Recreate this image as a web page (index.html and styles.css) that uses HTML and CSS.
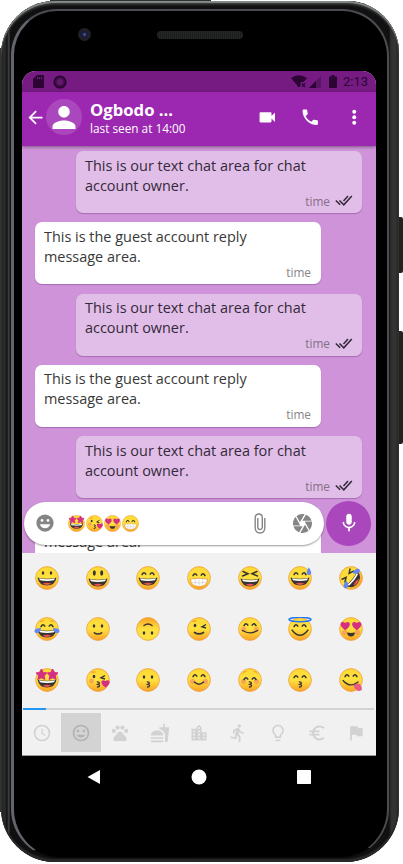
FILE: index.html
```html
<!DOCTYPE html>
<html lang="en">
<head>
<meta charset="utf-8">
<meta name="viewport" content="width=device-width, initial-scale=1">
<title>Chat</title>
<link rel="stylesheet" href="styles.css">
</head>
<body>
<svg class="defs" aria-hidden="true">
  <defs>
    <linearGradient id="skin" x1="0" y1="0" x2="0" y2="1"><stop offset="0" stop-color="#fdd835"/><stop offset=".5" stop-color="#fee13f"/><stop offset="1" stop-color="#f9a125"/></linearGradient>
    <linearGradient id="skin-flip" x1="0" y1="1" x2="0" y2="0"><stop offset=".5" stop-color="#fee13f"/><stop offset="1" stop-color="#f9a125"/></linearGradient>
    <symbol id="face" viewBox="0 0 24 24"><circle cx="12" cy="12" r="11.4" fill="url(#skin)" stroke="#eda044" stroke-width=".8"/></symbol>
    <symbol id="grin-mouth" viewBox="0 0 24 24"><path d="M2.5 12.5Q12 15 21.500 12.500Q20 20.500 12 20.500T2.500 12.500Z" fill="#383433"/><path d="M4 13.300Q12 15.200 20 13.300L19 15.300Q12 16.700 5 15.300Z" fill="#fff"/><path d="M7.500 18.800Q12 16.500 16.500 18.800Q12 21 7.500 18.800" fill="#ef5350"/></symbol>
    <symbol id="arc-eyes" viewBox="0 0 24 24"><path d="M6 8.700Q7.800 5 9.800 8.200M14.200 8.200Q16.200 5 18 8.700" fill="none" stroke="#383433" stroke-width="1.500" stroke-linecap="round"/></symbol>
    <symbol id="dot-eyes" viewBox="0 0 24 24"><ellipse cx="8" cy="8" rx="1.250" ry="1.700" fill="#383433"/><ellipse cx="16" cy="8" rx="1.250" ry="1.700" fill="#383433"/></symbol>
    <symbol id="wink-eyes" viewBox="0 0 24 24"><ellipse cx="8" cy="8.500" rx="1.300" ry="1.800" fill="#383433"/><path d="M19 7.500L15 9.800L19 11" fill="none" stroke="#383433" stroke-width="1.400"/><path d="M5.500 5Q7 3.300 9.500 4.200" fill="none" stroke="#ef9a27" stroke-width="1.100"/></symbol>
    <symbol id="heart" viewBox="0 0 10 10"><path d="M5 9.500C-3 4 1-.8 5 2.200C9-.8 13 4 5 9.500Z" fill="#d52f83"/></symbol>
    <symbol id="star" viewBox="0 0 10 10"><path d="M5 0L6.500 3.200L10 3.600L7.400 6L8.200 9.700L5 7.900L1.800 9.700L2.600 6L0 3.600L3.500 3.200Z" fill="#d52f83" stroke="#d52f83" stroke-linejoin="round"/></symbol>
    <symbol id="blush" viewBox="0 0 24 24"><circle cx="5.500" cy="13.300" r="2.600" fill="#f58d62" opacity=".65"/><circle cx="18.500" cy="13.300" r="2.600" fill="#f58d62" opacity=".65"/></symbol>
    <symbol id="kiss" viewBox="0 0 24 24"><path d="M10.800 13.900Q14 13.700 13.200 15.500L11.700 16.400Q14.500 16.800 13 18.700L10.900 19.200" fill="none" stroke="#383433" stroke-width="1.300"/></symbol>

    <symbol id="e-grin" viewBox="0 0 24 24"><use href="#face"/><use href="#dot-eyes" y="-1"/><use href="#grin-mouth" y="-1"/></symbol>
    <symbol id="e-open" viewBox="0 0 24 24"><use href="#face"/><ellipse cx="8.300" cy="7" rx="1.500" ry="2.800" fill="#383433"/><ellipse cx="15.700" cy="7" rx="1.500" ry="2.800" fill="#383433"/><use href="#grin-mouth"/></symbol>
    <symbol id="e-smile-open" viewBox="0 0 24 24"><use href="#face"/><use href="#arc-eyes"/><use href="#grin-mouth" y="-1"/></symbol>
    <symbol id="e-beam" viewBox="0 0 24 24"><use href="#face"/><use href="#arc-eyes" y="1"/><path d="M3.500 13Q12 11.300 20.500 13Q20.500 20.500 12 20.500T3.500 13Z" fill="#fff" stroke="#e59b2b" stroke-width=".8"/><path d="M4 16.400Q12 17.300 20 16.400M8.300 12.800V20M12 12.400V20.500M15.700 12.800V20" fill="none" stroke="#cfcfcf" stroke-width=".7"/></symbol>
    <symbol id="e-laugh" viewBox="0 0 24 24"><use href="#face"/><path d="M5 5.500L10 7.700L4.500 10M19 5.500L14 7.700L19.500 10" fill="none" stroke="#383433" stroke-width="1.500" stroke-linecap="round"/><use href="#grin-mouth"/></symbol>
    <symbol id="e-sweat" viewBox="0 0 24 24"><use href="#e-smile-open"/><path d="M20.800 1.500C18 6 18.200 9 21 9S24 6 20.800 1.500" fill="#6388f5"/></symbol>
    <symbol id="tear" viewBox="0 0 10 8"><path d="M9.500 .5Q1 .5 .5 4.500Q2 9 6 6.500Q9 4.500 9.500 .5" fill="#6388f5"/></symbol>
    <symbol id="e-rofl" viewBox="0 0 24 24"><g transform="rotate(-52 12 12)"><use href="#face"/><path d="M5 5.500L9.500 7.700L4.500 10M19 5.500L14.500 7.700L19.500 10" fill="none" stroke="#383433" stroke-width="1.500"/><use href="#grin-mouth"/><use href="#tear" x="-.5" y="9" width="8" height="7"/><g transform="translate(24 0) scale(-1 1)"><use href="#tear" x="-.5" y="9" width="8" height="7"/></g></g></symbol>
    <symbol id="e-joy" viewBox="-1 0 26 24"><use href="#face" width="24" height="24"/><use href="#arc-eyes" y="1" width="24" height="24"/><path d="M5 5Q7 3 9 4M15 4Q17 3 19 5" fill="none" stroke="#ef9a27"/><use href="#grin-mouth" width="24" height="24"/><use href="#tear" x="-1" y="10" width="7.500" height="7"/><g transform="translate(24 0) scale(-1 1)"><use href="#tear" x="-1" y="10" width="7.500" height="7"/></g></symbol>
    <symbol id="e-slight" viewBox="0 0 24 24"><use href="#face"/><use href="#dot-eyes" y="1"/><path d="M8.300 15.800Q12 18.300 15.700 15.800" fill="none" stroke="#383433" stroke-width="1.500" stroke-linecap="round"/></symbol>
    <symbol id="e-flip" viewBox="0 0 24 24"><circle cx="12" cy="12" r="11.400" fill="url(#skin-flip)" stroke="#eda044" stroke-width=".8"/><g transform="rotate(180 12 12)"><use href="#dot-eyes"/><path d="M8 15.500Q12 18.300 16 15.500" fill="none" stroke="#383433" stroke-width="1.500" stroke-linecap="round"/></g></symbol>
    <symbol id="e-wink" viewBox="0 0 24 24"><use href="#face"/><use href="#wink-eyes"/><path d="M7.500 15.500Q12 18.300 16.500 15.500" fill="none" stroke="#383433" stroke-width="1.700" stroke-linecap="round"/></symbol>
    <symbol id="e-blush" viewBox="0 0 24 24"><use href="#face"/><use href="#blush" y="-1"/><use href="#arc-eyes"/><path d="M4.500 13.500Q12 18.200 19.500 13.500" fill="none" stroke="#383433" stroke-width="1.400" stroke-linecap="round"/></symbol>
    <symbol id="e-halo" viewBox="0 0 24 24"><use href="#face"/><use href="#arc-eyes" y="1"/><path d="M4 13Q12 23.500 20 13" fill="none" stroke="#383433" stroke-width="1.300" stroke-linecap="round"/><ellipse cx="12" cy="2.500" rx="11" ry="2.200" fill="none" stroke="#2678f5" stroke-width="1.500"/></symbol>
    <symbol id="e-hearts" viewBox="0 0 24 24"><use href="#face"/><use href="#blush" y="2"/><use href="#heart" x="1" y="3.800" width="10.500" height="10"/><use href="#heart" x="12.500" y="3.800" width="10.500" height="10"/><path d="M8 15.500Q12 16.300 16 15.500Q15.500 19.500 12 19.500T8 15.500" fill="#383433"/></symbol>
    <symbol id="e-stars" viewBox="0 0 24 24"><use href="#face"/><use href="#grin-mouth" y="-1"/><use href="#star" x="1" y="1" width="10.800" height="10.800"/><use href="#star" x="12.200" y="1" width="10.800" height="10.800"/></symbol>
    <symbol id="e-kissheart" viewBox="0 0 24 24"><use href="#face"/><circle cx="5.500" cy="13" r="2.400" fill="#f58d62" opacity=".7"/><use href="#wink-eyes"/><use href="#kiss"/><use href="#heart" x="15" y="11" width="9" height="9"/></symbol>
    <symbol id="e-kissing" viewBox="0 0 24 24"><use href="#face"/><use href="#dot-eyes" y="1"/><use href="#kiss"/></symbol>
    <symbol id="e-happy" viewBox="0 0 24 24"><use href="#face"/><use href="#blush"/><use href="#arc-eyes"/><path d="M7.500 14Q12 18.500 16.500 14" fill="none" stroke="#383433" stroke-width="1.500" stroke-linecap="round"/></symbol>
    <symbol id="e-kissclosed" viewBox="0 0 24 24"><use href="#face"/><use href="#blush"/><path d="M5 5.500Q6 3 8.500 3.500M15.500 3.500Q18 3 19 5.500" fill="none" stroke="#ef9a27"/><use href="#arc-eyes" y="3"/><use href="#kiss"/></symbol>
    <symbol id="e-kisssmile" viewBox="0 0 24 24"><use href="#face"/><use href="#arc-eyes" y="1"/><use href="#kiss"/></symbol>
    <symbol id="e-yum" viewBox="0 0 24 24"><use href="#face"/><use href="#arc-eyes"/><path d="M4 12.500Q11 20.500 19 14" fill="none" stroke="#383433" stroke-width="1.300" stroke-linecap="round"/><path d="M14.500 17.500Q19 13.500 22 17.500Q24.500 22.500 20.500 23Q16.500 23 14.500 17.500" fill="#e75a83"/></symbol>

    <symbol id="ticks" viewBox="0 0 18 11"><path d="M.8 5.500L5.200 9.800M4.500 5.500L8.800 9.800L16.800 1M8.500 6L13 1" fill="none" stroke="#33273a" stroke-width="1.500"/></symbol>
  </defs>
</svg>

<div class="phone">
  <i class="edge edge-top"></i><i class="edge edge-left"></i>
  <i class="key key-power"></i><i class="key key-volume"></i>
  <div class="body">
    <div class="glass">
      <div class="top-bezel"><span class="camera"></span><span class="speaker"></span></div>
      <div class="screen">
        <div class="status">
          <svg class="sd" viewBox="0 0 11 13"><path d="M4 0H10Q11 0 11 1V12Q11 13 10 13H1Q0 13 0 12V4Z" fill="#2c0433"/><path d="M4.500 2V4M6.500 2V4M8.500 2V4" stroke="#751b82"/></svg>
          <svg class="ring" viewBox="0 0 14 14"><circle cx="7" cy="7" r="5.700" fill="#46104f" stroke="#2c0433" stroke-width="1.800"/><circle cx="7" cy="7" r="3" fill="#64176f"/></svg>
          <svg class="wifi" viewBox="0 0 16 13"><path d="M0 3Q8-2.500 16 3L12.600 7H9.500V10.700L8 12.500Z" fill="#2c0433"/><path d="M11 8.500L14 11.800M14 8.500L11 11.800" stroke="#2c0433" stroke-width="1.200"/></svg>
          <svg class="cell" viewBox="0 0 12 12"><path d="M12 0V12H0Z" fill="#591463"/><path d="M7 5V12H0Z" fill="#2c0433"/></svg>
          <svg class="battery" viewBox="0 0 8 13"><path d="M2.500 0H5.500V1.500H7.300Q8 1.500 8 2.200V12.300Q8 13 7.300 13H.7Q0 13 0 12.300V2.200Q0 1.500.7 1.500H2.500Z" fill="#2c0433"/></svg>
          <span class="clock">2:13</span>
        </div>
        <header class="header">
          <svg class="back" viewBox="0 0 24 24"><path d="M20 11H7.830l5.590-5.590L12 4l-8 8 8 8 1.410-1.410L7.830 13H20z" fill="#fff"/></svg>
          <div class="avatar"><svg viewBox="4 4 16 16"><path d="M12 12c2.210 0 4-1.790 4-4s-1.790-4-4-4-4 1.790-4 4 1.790 4 4 4zm0 2c-2.670 0-8 1.340-8 4v2h16v-2c0-2.660-5.330-4-8-4z" fill="#fff"/></svg></div>
          <div class="contact"><h1>Ogbodo ...</h1><p>last seen at 14:00</p></div>
          <div class="actions">
            <svg viewBox="0 0 24 24"><path d="M17 10.500V7c0-.55-.45-1-1-1H4c-.55 0-1 .45-1 1v10c0 .55.45 1 1 1h12c.55 0 1-.45 1-1v-3.500l4 4v-11l-4 4z"/></svg>
            <svg viewBox="0 0 24 24"><path d="M6.620 10.790c1.440 2.830 3.760 5.140 6.590 6.590l2.200-2.200c.27-.27.670-.36 1.020-.24 1.120.37 2.330.57 3.570.57.550 0 1 .45 1 1V20c0 .55-.45 1-1 1-9.390 0-17-7.610-17-17 0-.55.45-1 1-1h3.500c.55 0 1 .45 1 1 0 1.250.2 2.450.57 3.570.11.350.03.740-.25 1.020l-2.200 2.200z"/></svg>
            <svg viewBox="0 0 24 24"><circle cx="12" cy="5.500" r="2.300"/><circle cx="12" cy="12" r="2.300"/><circle cx="12" cy="18.500" r="2.300"/></svg>
          </div>
        </header>

        <main class="chat">
          <article class="bubble own"><p>This is our text chat area for chat<br>account owner.</p><footer>time<svg><use href="#ticks"/></svg></footer></article>
          <article class="bubble"><p>This is the guest account reply<br>message area.</p><footer>time</footer></article>
          <article class="bubble own"><p>This is our text chat area for chat<br>account owner.</p><footer>time<svg><use href="#ticks"/></svg></footer></article>
          <article class="bubble"><p>This is the guest account reply<br>message area.</p><footer>time</footer></article>
          <article class="bubble own"><p>This is our text chat area for chat<br>account owner.</p><footer>time<svg><use href="#ticks"/></svg></footer></article>
          <article class="bubble"><p>This is the guest account reply<br>message area.</p></article>

          <div class="composer">
            <div class="field">
              <svg class="smiley" viewBox="0 0 24 24"><circle cx="12" cy="12" r="11.500" fill="#858585"/><circle cx="8" cy="8.500" r="1.800" fill="#fff"/><circle cx="16" cy="8.500" r="1.800" fill="#fff"/><path d="M5 13.500H19Q17 19 12 19T5 13.500Z" fill="#fff"/></svg>
              <div class="typed">
                <svg><use href="#e-stars"/></svg><svg><use href="#e-kissheart"/></svg><svg><use href="#e-hearts"/></svg><svg><use href="#e-beam"/></svg>
              </div>
              <svg class="clip" viewBox="0 0 12 21"><path d="M10.800 5V15Q10.500 20 6 20T1.200 15V4.300Q1.500 1 4.800 1T8.300 4.300V14.500Q8 16.500 6 16.500T3.800 14.500V5" fill="none" stroke="#858585" stroke-width="1.400"/></svg>
              <svg class="shutter" viewBox="2 2 20 20"><path d="M9.400 10.500l4.770-8.260C13.470 2.090 12.750 2 12 2c-2.400 0-4.600.85-6.320 2.250l3.660 6.350.06-.1zM21.540 9c-.92-2.920-3.150-5.260-6-6.340L11.880 9h9.660zm.26 1h-7.490l.29.500 4.760 8.250C21 16.970 22 14.610 22 12c0-.69-.07-1.350-.2-2zM8.540 12l-3.900-6.750C3.010 7.030 2 9.390 2 12c0 .69.070 1.350.2 2h7.490l-1.150-2zm-6.080 3c.92 2.920 3.150 5.260 6 6.340L12.120 15H2.460zm11.270 0l-3.900 6.760c.7.150 1.420.24 2.170.24 2.400 0 4.600-.85 6.320-2.250l-3.660-6.350-.93 1.600z" fill="#858585"/></svg>
            </div>
            <div class="mic"><svg viewBox="0 0 24 24"><path d="M12 14c1.660 0 3-1.340 3-3V5c0-1.660-1.340-3-3-3S9 3.340 9 5v6c0 1.660 1.340 3 3 3zm5.300-3c0 3-2.540 5.100-5.300 5.100S6.700 14 6.700 11H5c0 3.410 2.720 6.230 6 6.720V21h2v-3.280c3.280-.48 6-3.300 6-6.720h-1.700z" fill="#fff"/></svg></div>
          </div>
        </main>

        <section class="emojis">
          <svg><use href="#e-grin"/></svg><svg><use href="#e-open"/></svg><svg><use href="#e-smile-open"/></svg><svg><use href="#e-beam"/></svg><svg><use href="#e-laugh"/></svg><svg><use href="#e-sweat"/></svg><svg><use href="#e-rofl"/></svg>
          <svg class="wide"><use href="#e-joy"/></svg><svg><use href="#e-slight"/></svg><svg><use href="#e-flip"/></svg><svg><use href="#e-wink"/></svg><svg><use href="#e-blush"/></svg><svg><use href="#e-halo"/></svg><svg><use href="#e-hearts"/></svg>
          <svg><use href="#e-stars"/></svg><svg><use href="#e-kissheart"/></svg><svg><use href="#e-kissing"/></svg><svg><use href="#e-happy"/></svg><svg><use href="#e-kissclosed"/></svg><svg><use href="#e-kisssmile"/></svg><svg><use href="#e-yum"/></svg>
        </section>
        <div class="progress"><span></span></div>
        <nav class="tabs">
          <span><svg viewBox="0 0 24 24"><circle cx="12" cy="12" r="9" class="line"/><path d="M12 7V12.500L16 15" class="line thin"/></svg></span>
          <span class="active"><svg viewBox="0 0 24 24"><circle cx="12" cy="12" r="9" class="line"/><circle cx="8.500" cy="9.500" r="1.500"/><circle cx="15.500" cy="9.500" r="1.500"/><path d="M7 14H17Q15.500 17.500 12 17.500T7 14"/></svg></span>
          <span><svg viewBox="0 0 24 24"><circle cx="4.500" cy="9.500" r="2.500"/><circle cx="9" cy="5.500" r="2.500"/><circle cx="15" cy="5.500" r="2.500"/><circle cx="19.500" cy="9.500" r="2.500"/><path d="M17.340 14.860c-.87-1.020-1.600-1.890-2.480-2.910-.46-.54-1.050-1.080-1.750-1.320-.8-.23-1.420-.23-2.220 0-.7.240-1.280.780-1.750 1.320-.87 1.020-1.600 1.890-2.480 2.910-1.310 1.310-2.920 2.760-2.620 4.790.29 1.020 1.020 2.030 2.330 2.320.73.150 3.060-.44 5.540-.44h.18c2.480 0 4.810.580 5.540.44 1.310-.29 2.040-1.310 2.330-2.320.31-2.040-1.300-3.490-2.620-4.790z"/></svg></span>
          <span><svg viewBox="0 0 24 24"><path d="M18.060 22.990h1.660c.84 0 1.530-.64 1.630-1.460L23 5.050h-5V1h-1.970v4.050h-4.970l.3 2.340c1.710.47 3.310 1.320 4.270 2.260 1.440 1.420 2.430 2.890 2.430 5.290v8.050zM1 21.990V21h15.030v.99c0 .55-.45 1-1.010 1H2.010c-.56 0-1.010-.45-1.010-1zm15.030-7c0-8-15.030-8-15.030 0h15.030zM1.020 17h15v2h-15v-2z"/></svg></span>
          <span><svg viewBox="0 0 24 24"><path d="M15 11V5l-3-3-3 3v2H3v14h18V11h-6zm-8 8H5v-2h2v2zm0-4H5v-2h2v2zm0-4H5V9h2v2zm6 8h-2v-2h2v2zm0-4h-2v-2h2v2zm0-4h-2V9h2v2zm0-4h-2V5h2v2zm6 12h-2v-2h2v2zm0-4h-2v-2h2v2z"/></svg></span>
          <span><svg viewBox="0 0 24 24"><path d="M13.490 5.480c1.100 0 2-.9 2-2s-.9-2-2-2-2 .9-2 2 .9 2 2 2zm-3.600 13.900l1-4.400 2.100 2v6h2v-7.500l-2.100-2 .6-3c1.300 1.500 3.300 2.500 5.500 2.500v-2c-1.900 0-3.500-1-4.300-2.400l-1-1.600c-.4-.6-1-1-1.700-1-.3 0-.5.1-.8.1l-5.200 2.200v4.700h2v-3.400l1.800-.7-1.600 8.100-4.900-1-.4 2 7 1.400z"/></svg></span>
          <span><svg viewBox="0 0 24 24"><path d="M9 21c0 .55.45 1 1 1h4c.55 0 1-.45 1-1v-1H9v1zm3-19C8.140 2 5 5.140 5 9c0 2.380 1.190 4.470 3 5.740V17c0 .55.45 1 1 1h6c.55 0 1-.45 1-1v-2.260c1.810-1.270 3-3.360 3-5.740 0-3.860-3.140-7-7-7zm2.850 11.100l-.85.6V16h-4v-2.300l-.85-.6C7.800 12.160 7 10.630 7 9c0-2.760 2.240-5 5-5s5 2.240 5 5c0 1.630-.8 3.160-2.150 4.100z"/></svg></span>
          <span><svg viewBox="0 0 24 24"><path d="M15 18.500c-2.510 0-4.680-1.420-5.760-3.500H15v-2H8.580c-.05-.33-.08-.66-.08-1s.03-.67.080-1H15V9H9.240C10.320 6.920 12.500 5.500 15 5.500c1.610 0 3.090.59 4.230 1.570L21 5.300C19.410 3.870 17.300 3 15 3c-3.920 0-7.240 2.510-8.480 6H3v2h3.060c-.04.33-.06.66-.06 1s.02.67.06 1H3v2h3.520c1.240 3.490 4.560 6 8.480 6 2.310 0 4.410-.87 6-2.300l-1.780-1.770c-1.130.98-2.600 1.570-4.220 1.570z"/></svg></span>
          <span><svg viewBox="0 0 24 24"><path d="M14.400 6L14 4H5v17h2v-7h5.600l.4 2h7V6z"/></svg></span>
        </nav>
      </div>
      <nav class="system">
        <svg viewBox="0 0 16 16"><path d="M14 1V15L1.500 8Z"/></svg>
        <svg viewBox="0 0 16 16"><circle cx="8" cy="8" r="7.500"/></svg>
        <svg viewBox="0 0 16 16"><rect x="1" y="1" width="14" height="14" rx=".8"/></svg>
      </nav>
    </div>
  </div>
</div>
</body>
</html>
```
FILE: styles.css
```css
* { box-sizing: border-box; margin: 0; padding: 0; }
body { background: #fff; font-family: "Open Sans", "Noto Sans", sans-serif; overflow: hidden; }
svg { display: block; flex: none; }
.defs { position: absolute; width: 0; height: 0; }

.phone { position: relative; width: 403px; height: 864px; padding: 1px 4px 1px 1px; }
.edge, .key { position: absolute; background: #333; }
.edge-top { left: 50px; top: 0; width: 161px; height: 2px; }
.edge-left { left: 0; top: 48px; width: 2px; height: 764px; }
.key { left: 398px; width: 5px; border-radius: 0 2px 2px 0; background: #24221f; }
.key-power { top: 217px; height: 56px; }
.key-volume { top: 331px; height: 113px; }

.body {
  position: relative;
  height: 861px;
  padding: 8px 10px 4px 10px;
  border-radius: 54px 52px 54px 54px;
  background: linear-gradient(90deg, #222 0, #2c2c2c 4px, #111 6px, #4a4a4e 8px, #101010 9px, #111 50%, #111 388px, #303030 390px, #343434 394px, #252525);
  box-shadow: inset 0 2px 1px #858b8c, inset 0 4px 2px #333, inset 0 -3px 1px #292929, inset 0 0 0 1px #222;
}
.glass {
  height: 849px;
  border-radius: 46px 47px 49px 49px;
  border: 2px solid #4b4d53;
  border-left: 3px solid #62656c;
  border-bottom: 1px solid #080808;
  background: #000;
  padding: 0 11px 0 8px;
}
.top-bezel { height: 60px; display: flex; align-items: center; padding: 0 0 13px 56px; }
.camera { width: 13px; height: 13px; border-radius: 50%; border: 3px solid #202126; background: radial-gradient(circle, #465484 0 15%, #171b45 45%); }
.speaker { width: 86px; height: 8px; margin-left: 66px; border-radius: 4px; background: repeating-linear-gradient(90deg, #252626 0 1px, #1b1d1c 1px 2px); }

.screen { width: 354px; height: 685px; border-radius: 14px 14px 0 0; overflow: hidden; background: #f1f1f1; }
.status { height: 21px; background: #751b82; display: flex; align-items: center; padding: 0 7px 0 10.500px; }
.sd { width: 11px; height: 13px; }
.ring { width: 14px; height: 14px; margin-left: 9px; }
.wifi { width: 16px; height: 13px; margin-left: auto; }
.cell { width: 12px; height: 12px; margin-left: 2px; }
.battery { width: 8px; height: 13px; margin-left: 8px; }
.clock { width: 26px; margin-left: 6px; font: 13px/20px Roboto, sans-serif; color: #2c0433; white-space: nowrap; }

.header { position: relative; z-index: 1; height: 54px; background: #9c27b0; color: #fff; display: flex; align-items: center; padding: 0 12px 4px 3px; box-shadow: 0 1px 3px rgba(0, 0, 0, .4); }
.back { width: 21px; height: 21px; }
.avatar { width: 36px; height: 36px; border-radius: 50%; background: #ab47bc; display: grid; place-items: center; }
.avatar svg { width: 24px; height: 23px; }
.contact { margin-left: 8px; padding-top: 2px; }
.contact h1 { font-size: 16.700px; line-height: 20px; font-weight: 700; }
.contact p { font-size: 11.800px; line-height: 16px; }
.actions { margin-left: auto; display: flex; gap: 23px; }
.actions svg { width: 20.500px; height: 20.500px; fill: #fff; }

.chat { position: relative; height: 407px; overflow: hidden; background: #ce93d8; padding: 5px 14px 0 13px; display: flex; flex-direction: column; gap: 9.300px; }
.bubble { flex: none; width: 286px; height: 62px; padding: 4.500px 9px 0; border-radius: 7px; background: #fff; color: #383838; box-shadow: 0 1px 1px rgba(80, 20, 90, .3); }
.bubble.own { align-self: flex-end; background: #e1bee7; color: #33293a; }
.bubble p { font-size: 14.450px; line-height: 20px; white-space: nowrap; }
.bubble footer { display: flex; justify-content: flex-end; align-items: center; height: 12px; margin-top: -1px; padding-right: 1px; font-size: 11.800px; line-height: 12px; color: #858585; }
.bubble.own footer { padding-right: 0; color: #846f88; }
.bubble footer svg { width: 18px; height: 11px; margin-left: 5px; }

.composer { position: absolute; left: 1.500px; right: 5px; bottom: 7px; height: 46px; display: flex; align-items: center; justify-content: space-between; }
.field { width: 300.500px; height: 43px; border-radius: 22px; background: #fff; box-shadow: 0 1px 2px rgba(0, 0, 0, .4); display: flex; align-items: center; padding: 0 12px 0 12.500px; }
.smiley { width: 18px; height: 18px; }
.typed { display: flex; gap: 1px; margin: 1px 0 0 13.500px; }
.typed svg { width: 17px; height: 17px; }
.clip { width: 12px; height: 21px; margin-left: auto; }
.shutter { width: 19px; height: 19px; margin-left: 27px; }
.mic { width: 45px; height: 45px; border-radius: 50%; background: #ab47bc; display: grid; place-items: center; }
.mic svg { width: 22px; height: 22px; }

.emojis { height: 152px; display: grid; grid-template-columns: repeat(7, 1fr); grid-template-rows: repeat(3, 50.670px); place-items: center; }
.emojis svg { width: 24px; height: 24px; }
.emojis .wide { width: 26px; }
.progress { height: 2px; margin: 3px 2px 0 1px; background: #d3d3d3; }
.progress span { display: block; width: 23px; height: 2px; background: #2196f3; }
.tabs { height: 46px; padding-top: 3px; display: grid; grid-template-columns: repeat(9, 1fr); border-bottom: 1px solid #999; }
.tabs span { height: 39px; display: grid; place-items: center; }
.tabs svg { width: 20px; height: 20px; fill: #d2d2d2; }
.tabs .active { background: #d3d3d3; }
.tabs .active svg { fill: #b2b2b2; }
.tabs .line { fill: none; stroke: #d2d2d2; stroke-width: 2; }
.tabs .active .line { stroke: #b2b2b2; }
.tabs .thin { stroke-width: 1.500; }

.system { width: 354px; height: 42px; display: flex; align-items: center; justify-content: space-between; padding: 0 64px; }
.system svg { width: 16px; height: 16px; fill: #fff; }
```
